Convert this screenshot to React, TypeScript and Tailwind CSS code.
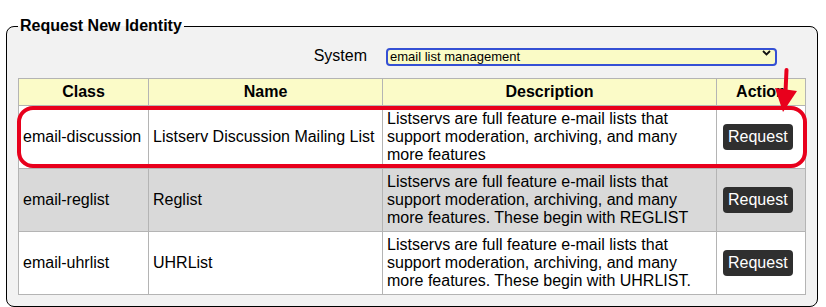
import { useState } from 'react'

const identities = [
  {
    cls: 'email-discussion',
    name: 'Listserv Discussion Mailing List',
    desc: 'Listservs are full feature e-mail lists that support moderation, archiving, and many more features',
  },
  {
    cls: 'email-reglist',
    name: 'Reglist',
    desc: 'Listservs are full feature e-mail lists that support moderation, archiving, and many more features. These begin with REGLIST',
  },
  {
    cls: 'email-uhrlist',
    name: 'UHRList',
    desc: 'Listservs are full feature e-mail lists that support moderation, archiving, and many more features. These begin with UHRLIST.',
  },
]

export default function App() {
  const [system, setSystem] = useState('email')

  return (
    <div className="relative w-[826px] h-[307px] bg-white pl-[6px] pt-[17px] font-['Liberation_Sans',Arial,sans-serif] text-[16px] text-black">
      <fieldset className="w-[811px] h-[290px] border border-black rounded-lg bg-[#f2f2f2] px-[11px]">
        <legend className="px-[2px] font-bold leading-[18px]">Request New Identity</legend>

        {/* System picker */}
        <div className="flex items-center justify-end gap-[19px] mt-[11px] pr-[29px] h-[20px]">
          <span className="leading-[18px]">System</span>
          <div className="relative">
            <select
              value={system}
              onChange={(e) => setSystem(e.target.value)}
              className="appearance-none w-[391px] h-[18px] bg-[#fafbc6] border-2 border-[#3550d4] rounded-[4px] pl-[2px] text-[13px] leading-[14px] outline-none"
            >
              <option value="email">email list management</option>
            </select>
            <svg className="absolute right-[6px] top-[6px] w-[9px] h-[6px] pointer-events-none" viewBox="0 0 9 6">
              <path d="M1 1l3.5 3.5L8 1" fill="none" stroke="#111" strokeWidth={1.8} />
            </svg>
          </div>
        </div>

        <div className="relative mt-[12px]">
          <table className="table-fixed w-[787px] border-collapse">
            <colgroup>
              <col className="w-[130px]" />
              <col className="w-[234px]" />
              <col className="w-[334px]" />
              <col className="w-[89px]" />
            </colgroup>
            <thead>
              <tr className="bg-[#fbfbc8]">
                {['Class', 'Name', 'Description', 'Action'].map((h) => (
                  <th key={h} className="border border-[#b4b4b4] px-[4px] py-[4px] leading-[18px] font-bold text-center">
                    {h}
                  </th>
                ))}
              </tr>
            </thead>
            <tbody>
              {identities.map((row, i) => (
                <tr key={row.cls} className={i === 1 ? 'bg-[#d9d9d9]' : 'bg-white'}>
                  <td className="border border-[#b4b4b4] px-[4px] py-[4px] leading-[18px]">{row.cls}</td>
                  <td className="border border-[#b4b4b4] px-[4px] py-[4px] leading-[18px]">{row.name}</td>
                  <td className="border border-[#b4b4b4] px-[4px] py-[4px] leading-[18px]">{row.desc}</td>
                  <td className="border border-[#b4b4b4] pl-[6px] pr-[4px] py-[4px]">
                    <button className="bg-[#2f2f2f] text-white rounded-[4px] px-[5px] h-[26px] leading-[18px]">
                      Request
                    </button>
                  </td>
                </tr>
              ))}
            </tbody>
          </table>

          {/* red highlight around first row */}
          <div className="absolute left-[-1px] top-[28px] w-[790px] h-[62px] border-[4px] border-[#e8001c] rounded-[16px] pointer-events-none" />
        </div>
      </fieldset>

      {/* red arrow pointing at the first Request button */}
      <svg className="absolute left-[770px] top-[66px] w-[32px] h-[50px] pointer-events-none" viewBox="0 0 32 50">
        <path d="M16.5 4L15.5 26" stroke="#e8001c" strokeWidth={4} strokeLinecap="round" />
        <path d="M5 22L27 25L13 46Z" fill="#e8001c" />
      </svg>
    </div>
  )
}
